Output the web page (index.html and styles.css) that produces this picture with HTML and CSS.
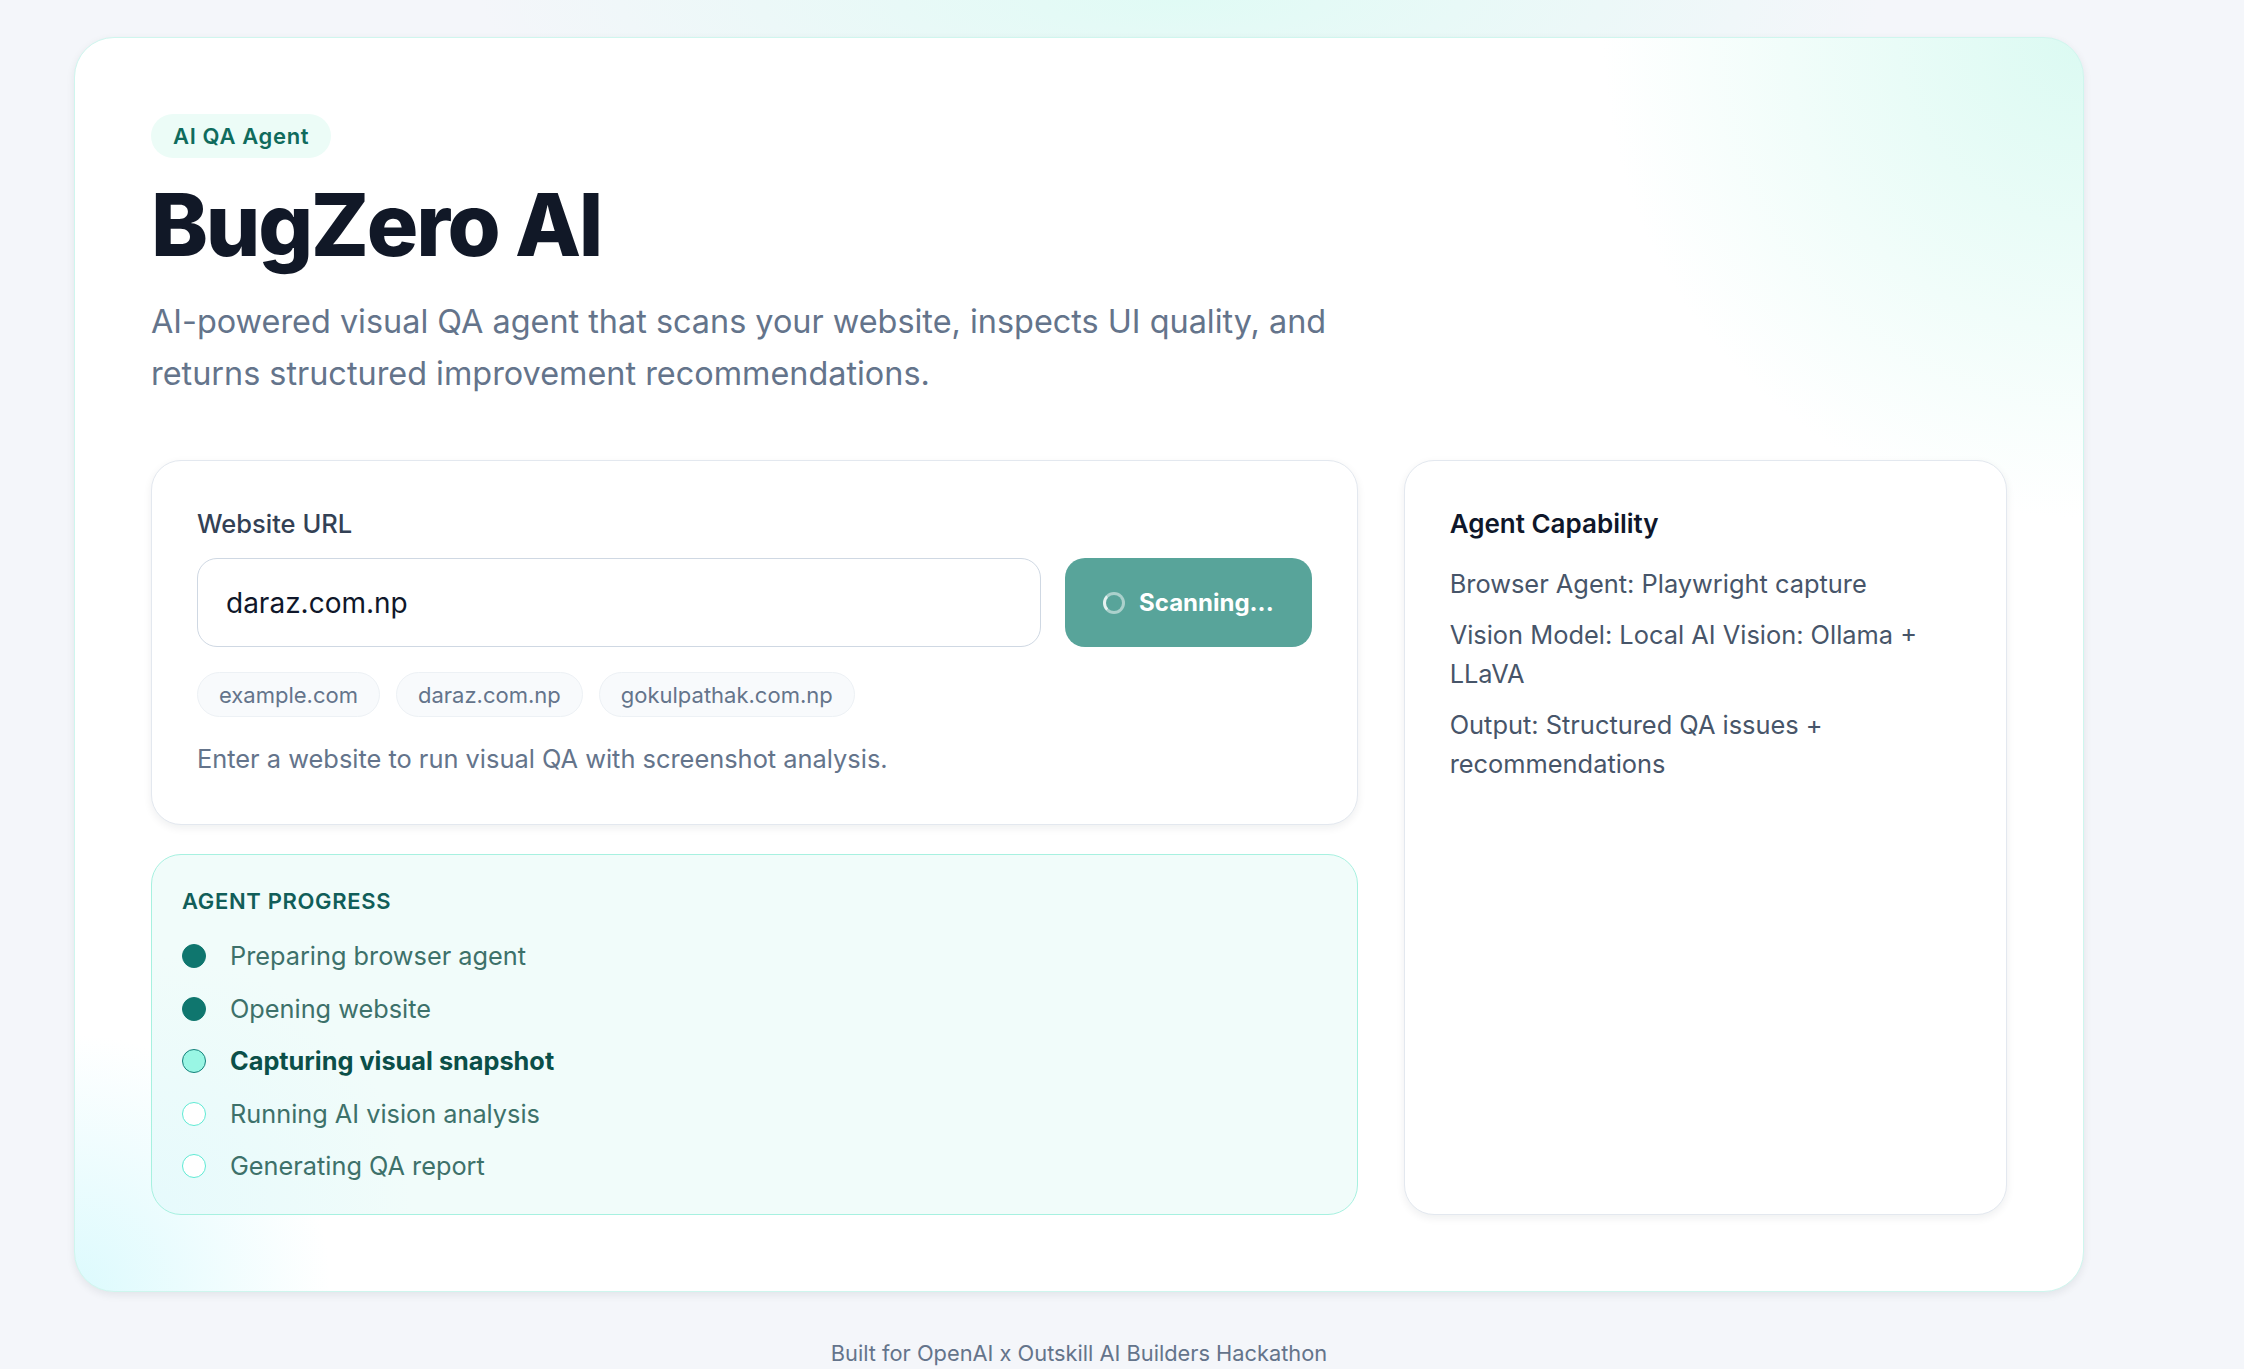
FILE: index.html
```html
<!DOCTYPE html>
<html>
	<head>
		<meta charset="UTF-8">
		<title>BugZero AI</title>
		<link rel="stylesheet" href="styles.css">
	</head>
	<body>
		<div class="page">
			<section class="hero">
				<span class="badge">AI QA Agent</span>
				<h1 class="title">BugZero AI</h1>
				<p class="lead">AI-powered visual QA agent that scans your website, inspects UI quality, and returns structured improvement recommendations.</p>

				<div class="grid">
					<div class="leftcol">
						<form class="card scan" action="" method="post">
							<label for="url">Website URL</label>
							<div class="row">
								<input type="text" id="url" name="url" value="daraz.com.np">
								<button type="button" class="scanbtn">
									<span class="spinner"></span>
									<span>Scanning...</span>
								</button>
							</div>
							<div class="chips">
								<span class="chip">example.com</span>
								<span class="chip">daraz.com.np</span>
								<span class="chip">gokulpathak.com.np</span>
							</div>
							<p class="help">Enter a website to run visual QA with screenshot analysis.</p>
						</form>

						<div class="progress">
							<h2>Agent Progress</h2>
							<ul class="steps">
								<li class="done"><span class="dot"></span>Preparing browser agent</li>
								<li class="done"><span class="dot"></span>Opening website</li>
								<li class="active"><span class="dot"></span>Capturing visual snapshot</li>
								<li><span class="dot"></span>Running AI vision analysis</li>
								<li><span class="dot"></span>Generating QA report</li>
							</ul>
						</div>
					</div>

					<aside class="card capability">
						<h2>Agent Capability</h2>
						<ul>
							<li>Browser Agent: Playwright capture</li>
							<li>Vision Model: Local AI Vision: Ollama + LLaVA</li>
							<li>Output: Structured QA issues + recommendations</li>
						</ul>
					</aside>
				</div>
			</section>

			<footer class="footer">Built for OpenAI x Outskill AI Builders Hackathon</footer>
		</div>
	</body>
</html>
```

FILE: styles.css
```css
* {
	margin: 0;
	padding: 0;
	box-sizing: border-box;
}
body {
	font-family: Inter, "Noto Sans", sans-serif;
	background-color: #f4f6fa;
	background-image: radial-gradient(ellipse 700px 160px at 1180px 0, #e0fbf5, rgba(244, 246, 250, 0));
	background-repeat: no-repeat;
	min-height: 1369px;
}
.page {
	width: 2010px;
	margin-left: 74px;
	padding-top: 37px;
}
.hero {
	border: 1px solid #cff6ee;
	border-radius: 40px;
	padding: 76px;
	background-color: #fff;
	background-image:
		radial-gradient(circle 640px at 100% 0, #dbfaf2, rgba(255, 255, 255, 0) 75%),
		radial-gradient(circle 320px at 0 100%, #dcfafd, rgba(255, 255, 255, 0) 80%);
	box-shadow: 0 3px 8px rgba(15, 23, 42, 0.08);
}
.badge {
	display: inline-flex;
	align-items: center;
	height: 44px;
	padding: 0 22px;
	border-radius: 999px;
	background-color: #ecfcf7;
	color: #0f6b5c;
	font-size: 22px;
	font-weight: 600;
	letter-spacing: 0.03em;
}
.title {
	margin-top: 24px;
	font-size: 86px;
	line-height: 1;
	font-weight: 800;
	letter-spacing: -0.027em;
	color: #111827;
}
.lead {
	margin-top: 28px;
	max-width: 1200px;
	font-size: 32.4px;
	line-height: 51.5px;
	color: #64748b;
}
.grid {
	display: grid;
	grid-template-columns: 2fr 1fr;
	gap: 46px;
	margin-top: 61px;
}
.leftcol {
	display: flex;
	flex-direction: column;
	gap: 29px;
}
.card {
	background-color: #fff;
	border: 1px solid #e3e8ef;
	border-radius: 30px;
	padding: 45px;
	box-shadow: 0 3px 8px rgba(15, 23, 42, 0.07);
}
.scan {
	padding-bottom: 47px;
}
.scan label {
	display: block;
	font-size: 25.5px;
	line-height: 36px;
	font-weight: 500;
	color: #334155;
}
.row {
	display: flex;
	gap: 24px;
	margin-top: 16px;
}
.row input {
	flex: 1;
	height: 89px;
	padding: 0 28px;
	border: 1px solid #cfd8e3;
	border-radius: 20px;
	font-family: inherit;
	font-size: 28px;
	color: #0f172a;
	background-color: #fff;
	outline: none;
}
.scanbtn {
	display: flex;
	align-items: center;
	gap: 14px;
	padding: 0 38px;
	border: none;
	border-radius: 20px;
	background-color: #58a49a;
	color: #fff;
	font-family: inherit;
	font-size: 24px;
	font-weight: 700;
}
.spinner {
	width: 22px;
	height: 22px;
	border-radius: 50%;
	border: 3px solid rgba(255, 255, 255, 0.5);
	border-left-color: rgba(255, 255, 255, 0.85);
}
.chips {
	display: flex;
	gap: 16px;
	margin-top: 25px;
}
.chip {
	display: inline-flex;
	align-items: center;
	height: 45px;
	padding: 0 21px;
	border: 1px solid #edf1f5;
	border-radius: 999px;
	background-color: #f8fafc;
	color: #64748b;
	font-size: 22px;
}
.help {
	margin-top: 24px;
	font-size: 25.4px;
	line-height: 36px;
	color: #64748b;
}
.progress {
	border: 1px solid #a7f1e0;
	border-radius: 30px;
	padding: 30px;
	background-color: #f1fcfa;
	background-image: radial-gradient(circle 260px at 0 100%, #e6fafc, rgba(241, 252, 250, 0));
}
.progress h2 {
	font-size: 22px;
	line-height: 32px;
	font-weight: 600;
	letter-spacing: 0.03em;
	text-transform: uppercase;
	color: #115e59;
}
.steps {
	list-style: none;
	margin-top: 21px;
	display: flex;
	flex-direction: column;
	gap: 16.5px;
}
.steps li {
	display: flex;
	align-items: center;
	gap: 24px;
	font-size: 25.3px;
	line-height: 36px;
	color: #3d716a;
}
.dot {
	width: 24px;
	height: 24px;
	border-radius: 50%;
	border: 1.5px solid #5eead4;
	background-color: #fff;
}
.steps .done .dot {
	background-color: #0f766e;
	border-color: #0f766e;
}
.steps .active {
	font-weight: 700;
	color: #0b4f48;
}
.steps .active .dot {
	background-color: #99f6e4;
	border-color: #14807a;
}
.capability h2 {
	font-size: 26px;
	line-height: 36px;
	font-weight: 600;
	color: #0f172a;
}
.capability ul {
	list-style: none;
	margin-top: 23px;
	display: flex;
	flex-direction: column;
	gap: 13px;
}
.capability li {
	font-size: 25.4px;
	line-height: 38.4px;
	color: #475569;
}
.footer {
	margin-top: 46px;
	text-align: center;
	font-size: 21.8px;
	line-height: 30px;
	color: #64748b;
}
```
